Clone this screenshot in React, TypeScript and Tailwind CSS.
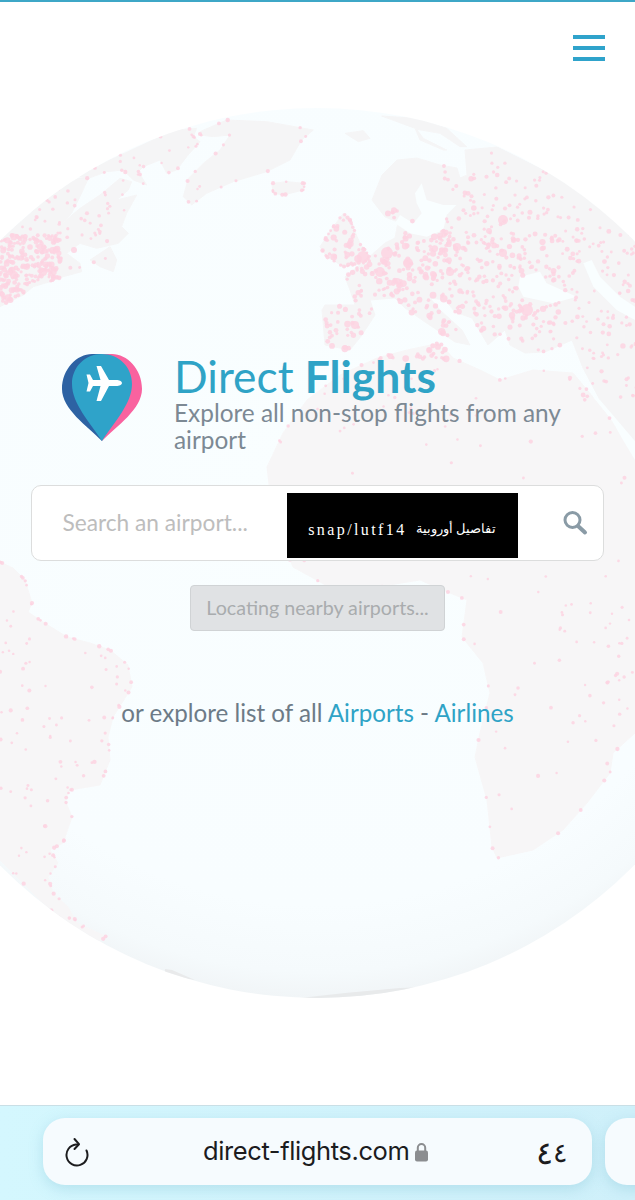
import React, { useMemo } from "react";

type P = [number, number];
const z = (ox: number, oy: number, pts: number[]): P[] => {
  const out: P[] = [];
  for (let i = 0; i < pts.length; i += 2) out.push([ox + pts[i] / 3, oy + pts[i + 1] / 3]);
  return out;
};

const northAmerica = z(0, 100, [-30,440, 0,420, 80,350, 170,270, 235,235, 265,235, 240,290, 215,340, 180,375, 240,325, 300,285, 360,235, 395,245, 385,270, 350,300, 410,285, 380,340, 365,380, 385,400, 355,430, 290,445, 240,430, 200,460, 240,490, 245,515, 190,530, 150,545, 100,560, 70,585, 0,620, -30,640]);
const arctic = z(0, 100, [235,230, 330,180, 470,115, 530,90, 590,85, 580,110, 600,125, 560,170, 530,210, 500,220, 480,180, 430,200, 415,215, 440,255, 400,240, 370,210, 320,215, 265,235]);
const greenland = z(0, 100, [600,95, 680,60, 800,65, 940,90, 905,120, 870,180, 800,215, 700,245, 620,280, 575,315, 550,290, 565,235, 610,190, 660,150, 690,105, 640,110, 600,105]);
const iceland = z(0, 100, [815,250, 860,245, 915,250, 910,270, 850,285, 820,280]);
const newfoundland = z(0, 100, [270,480, 330,440, 350,480, 340,515, 300,500]);
const uk = z(300, 100, [60,440, 100,380, 130,340, 150,360, 180,430, 210,470, 190,490, 130,500, 80,470]);
const zemlya = z(300, 100, [245,48, 350,55, 440,85, 500,140, 480,140, 420,100, 350,88, 370,115, 440,150, 430,150, 360,120, 345,85]);
const svalbard = z(300, 100, [135,100, 190,92, 210,115, 175,125]);
const eurasia: P[] = [
  [382,175],[397,160],[417,158],[440,165],[457,168],[460,178],[467,175],[465,150],[497,147],[533,165],[583,190],[635,233],[680,280],[680,480],[635,447],
  [600,400],[583,368],[572,340],[545,352],[525,353],[510,345],[505,330],[488,345],[472,318],[455,312],[445,300],[430,298],[440,310],[462,330],[470,345],[455,342],[425,322],[405,308],[395,298],[370,300],[375,315],[362,335],[350,350],[325,345],[322,310],[325,305],[355,305],[350,290],[345,277],[368,258],[385,243],[395,238],[398,222],[385,217],[372,200],
];
const africa: P[] = [
  [377,358],[407,350],[440,343],[453,358],[480,370],[500,380],[533,370],[573,373],[593,397],[650,470],[650,720],[635,733],[613,753],[610,773],[587,803],[563,830],[533,850],[497,858],[492,847],[487,800],[475,757],[480,733],[490,693],[483,663],[462,637],[467,600],[450,593],[420,580],[340,593],[293,567],[273,520],[267,467],[283,433],[307,400],[340,375],
];
const southAmerica: P[] = [
  [-10,560],[0,562],[13,568],[25,580],[32,603],[28,612],[43,622],[67,637],[90,643],[110,650],[128,665],[132,687],[113,717],[108,737],[110,760],[100,785],[70,790],[65,800],[72,817],[63,843],[50,850],[58,863],[48,877],[53,893],[68,907],[77,923],[107,937],[90,945],[40,900],[-10,850],
];
const antarctica: P[] = [[165,969],[172,970],[195,980],[165,975]];
const antarctica2: P[] = [[300,998],[345,993],[400,988],[480,985],[480,1010],[300,1010]];
const lands = [northAmerica, arctic, greenland, iceland, newfoundland, uk, eurasia, zemlya, svalbard];
const southLands = [africa, southAmerica];
const allLands = [...lands, ...southLands];

const baltic = z(300, 100, [345,280, 365,250, 380,300, 430,315, 470,315, 440,345, 430,390, 380,410, 330,400, 285,370, 300,345, 340,370, 365,340, 350,310]);
const blackSea = z(300, 100, [660,530, 720,515, 740,550, 830,590, 760,610, 670,590, 655,560]);
const caspian = z(300, 100, [850,490, 875,480, 900,530, 960,590, 1005,620, 1005,660, 950,630, 880,560]);
const redSea: P[] = [[593,397],[610,417],[623,440],[635,460],[640,462],[640,447],[623,427],[600,400]];
const seas = [baltic, blackSea, caspian, redSea];

const inPoly = (x: number, y: number, poly: P[]) => {
  let c = false;
  for (let i = 0, j = poly.length - 1; i < poly.length; j = i++) {
    const [xi, yi] = poly[i];
    const [xj, yj] = poly[j];
    if (yi > y !== yj > y && x < ((xj - xi) * (y - yi)) / (yj - yi) + xi) c = !c;
  }
  return c;
};
const onLand = (x: number, y: number) => allLands.some((l) => inPoly(x, y, l)) && !seas.some((s) => inPoly(x, y, s));
const toPts = (p: P[]) => p.map((q) => q.join(",")).join(" ");

type Dot = { x: number; y: number; r: number };
const regions: [number, number, number, number, number, number, number][] = [
  [320, 210, 130, 150, 460, 1.6, 4],
  [440, 230, 120, 130, 280, 1.6, 3.4],
  [440, 150, 195, 100, 150, 1.5, 3],
  [560, 240, 80, 160, 120, 1.4, 2.8],
  [0, 235, 60, 70, 240, 1.6, 3.6],
  [0, 180, 110, 130, 150, 1.4, 2.6],
  [100, 130, 100, 90, 40, 1.2, 2],
  [270, 345, 365, 100, 50, 1.2, 2.2],
  [270, 440, 365, 420, 85, 1.2, 2.2],
  [550, 600, 85, 150, 35, 1.2, 2.2],
  [0, 570, 130, 380, 130, 1.2, 2.4],
];
const bigDots: Dot[] = [
  [363,257,6],[387,253,6],[380,272,5],[408,263,5],[457,247,4],[503,220,5],[527,310,6],[450,272,4],[503,253,4],[400,285,3],[434,275,3],[355,325,4],[43,272,4],[14,275,4],[74,250,3],
].map(([x, y, r]) => ({ x, y, r }));

function makeDots(): Dot[] {
  let s = 20240611;
  const rnd = () => {
    s = (s * 1664525 + 1013904223) >>> 0;
    return s / 4294967296;
  };
  const dots: Dot[] = [...bigDots];
  for (const [x, y, w, h, n, r0, r1] of regions) {
    for (let i = 0; i < n; i++) {
      const px = x + rnd() * w;
      const py = y + rnd() * h;
      if (onLand(px, py)) dots.push({ x: px, y: py, r: r0 + rnd() * rnd() * (r1 - r0) });
    }
  }
  for (const [poly, n] of [[greenland, 1], [arctic, 1], [iceland, 2], [uk, 3], [southAmerica, 2], [africa, 1]] as [P[], number][]) {
    poly.forEach((q, i) => {
      const nx = poly[(i + 1) % poly.length];
      for (let k = 0; k < n; k++) {
        const t = rnd();
        dots.push({ x: q[0] + (nx[0] - q[0]) * t, y: q[1] + (nx[1] - q[1]) * t, r: 1.2 + rnd() });
      }
    });
  }
  return dots;
}

function Globe() {
  const dots = useMemo(makeDots, []);
  return (
    <svg className="absolute left-0 top-0" width="635" height="1105" viewBox="0 0 635 1105">
      <defs>
        <radialGradient id="ocean" cx="0.5" cy="0.42" r="0.58">
          <stop offset="0" stopColor="#f9feff" />
          <stop offset="0.82" stopColor="#f8fdff" />
          <stop offset="0.95" stopColor="#f5fafc" />
          <stop offset="1" stopColor="#f1f5f7" />
        </radialGradient>
        <clipPath id="globeClip">
          <circle cx="317" cy="553" r="445" />
        </clipPath>
      </defs>
      <circle cx="317" cy="553" r="445" fill="url(#ocean)" />
      <g clipPath="url(#globeClip)">
        <g className="blur-[0.7px]">
          {lands.map((l, i) => (
            <polygon key={i} points={toPts(l)} fill="#f5f5f6" stroke="#f5f5f6" strokeLinejoin="round" />
          ))}
          {southLands.map((l, i) => (
            <polygon key={i} points={toPts(l)} fill="#f7f6f7" stroke="#f7f6f7" strokeLinejoin="round" />
          ))}
          <polygon points={toPts(antarctica)} fill="#e9eaeb" />
          <polygon points={toPts(antarctica2)} fill="#e8eaeb" />
          {seas.map((l, i) => (
            <polygon key={i} points={toPts(l)} fill="#f9feff" />
          ))}
          <g fill="#fdd3e2" fillOpacity="0.85">
            {dots.map((d, i) => (
              <circle key={i} cx={d.x} cy={d.y} r={d.r} />
            ))}
          </g>
        </g>
      </g>
    </svg>
  );
}

function Logo() {
  return (
    <svg width="80" height="88" viewBox="0 0 80 88" className="shrink-0">
      <path d="M40 87C55 72 80 55 80 35C80 15 65 0 50 0L40 0Z" fill="#f9629f" />
      <path d="M40 87C25 72 0 55 0 35C0 15 15 0 30 0L40 0Z" fill="#2d62a3" />
      <path d="M40 87C28 68 10 50 10 30C10 13 23 0 40 0C57 0 70 13 70 30C70 50 52 68 40 87Z" fill="#2fa3c9" />
      <path d="M60 29C60 27.3 57 26 54.5 26L47 26L39 12L34.5 12L38.5 26L31 26L28 20.5L24.5 20.5L26.5 29L24.5 37.5L28 37.5L31 32L38.5 32L34.5 47L39 47L47 32L54.5 32C57 32 60 30.7 60 29Z" fill="#ffffff" />
    </svg>
  );
}

export default function App() {
  return (
    <div className="relative flex h-[1200px] w-[635px] flex-col overflow-hidden bg-white font-['Lato',sans-serif]">
      <Globe />
      <div className="relative flex flex-1 flex-col border-t-2 border-[#3ea7c7]">
        <div className="flex justify-end pr-[30px] pt-[33px]">
          <div className="flex w-[32px] flex-col gap-[7px]">
            <div className="h-[4px] bg-[#2fa3cb]" />
            <div className="h-[4px] bg-[#2fa3cb]" />
            <div className="h-[4px] bg-[#2fa3cb]" />
          </div>
        </div>

        <div className="mt-[293px] flex gap-[32px] pl-[62px] pr-[60px]">
          <Logo />
          <div className="-mt-[2px]">
            <div className="text-[44.3px] leading-[47px] text-[#2fa3c6]">
              Direct <span className="font-bold">Flights</span>
            </div>
            <div className="text-[24.4px] leading-[27px] text-[#7c8994]">Explore all non-stop flights from any airport</div>
          </div>
        </div>

        <div className="mx-[31px] mt-[32px] flex h-[76px] items-center rounded-[10px] border-[1.5px] border-[#dcdddd] bg-white">
          <div className="w-[254.5px] pl-[30.5px] text-[22.7px] text-[#bdbdbd]">Search an airport...</div>
          <div dir="rtl" className="mt-[5px] flex h-[65px] w-[231px] items-center justify-center bg-black pt-[8px] font-['Liberation_Serif',serif] text-white">
            <span className="text-[12.5px]">تفاصيل أوروبية</span>
            <span dir="ltr" className="mr-[9px] text-[16px] tracking-[2.4px]">snap/lutf14</span>
          </div>
          <svg className="ml-[44px]" width="26" height="26" viewBox="0 0 26 26" fill="none">
            <circle cx="10.5" cy="10" r="7.5" stroke="#8a9ba6" strokeWidth="3" />
            <path d="M16 16L23 22.5" stroke="#8a9ba6" strokeWidth="4" strokeLinecap="round" />
          </svg>
        </div>

        <div className="mt-[24px] flex justify-center">
          <div className="flex h-[46px] w-[255px] items-center justify-center rounded-[4px] border border-[#d0d3d5] bg-[#e0e2e4] text-[19.7px] text-[#a9acae]">
            Locating nearby airports...
          </div>
        </div>

        <div className="mt-[67px] text-center text-[24.2px] leading-[30px] text-[#6d7b87]">
          or explore list of all <span className="text-[#2fa3c6]">Airports</span> - <span className="text-[#2fa3c6]">Airlines</span>
        </div>
      </div>

      <div className="relative flex h-[95px] gap-[13px] border-t border-[#c9dfe6] bg-gradient-to-r from-[#d4f7fe] to-[#cff0fa] pl-[43px] pt-[12px]">
        <div className="flex h-[67px] w-[549px] shrink-0 items-center rounded-[22px] bg-[#f6fbfe] pl-[20px] pr-[24px] shadow-[0_4px_14px_rgba(120,190,210,0.35)]">
          <svg width="28" height="30" viewBox="0 0 28 30" fill="none" stroke="#1c1c1e" strokeWidth="2" strokeLinecap="round" strokeLinejoin="round">
            <path d="M23.5 13.5A10.5 10.5 0 1 1 13 7.5L15 7.5" />
            <path d="M11.5 2L16 7.2L11.5 12" />
          </svg>
          <div className="ml-[112px] flex items-center gap-[5px]">
            <span className="font-['Inter',sans-serif] text-[25.5px] tracking-[-0.4px] text-[#1c1c1e]">direct-flights.com</span>
            <svg width="15" height="20" viewBox="0 0 15 20" className="mt-[1px]">
              <path d="M3.8 9V5.7a3.7 3.7 0 0 1 7.4 0V9" fill="none" stroke="#8b8d90" strokeWidth="2" />
              <rect x="1" y="8.5" width="13" height="11" rx="2" fill="#8b8d90" />
            </svg>
          </div>
          <div className="ml-auto flex items-center font-['Noto_Sans',sans-serif] text-[#1c1c1e]">
            <span className="text-[32px] leading-none">٤</span>
            <span className="text-[27px] leading-none">٤</span>
          </div>
        </div>
        <div className="h-[67px] w-[60px] shrink-0 rounded-[22px] bg-[#f6fbfe] shadow-[0_4px_14px_rgba(120,190,210,0.35)]" />
      </div>
    </div>
  );
}
